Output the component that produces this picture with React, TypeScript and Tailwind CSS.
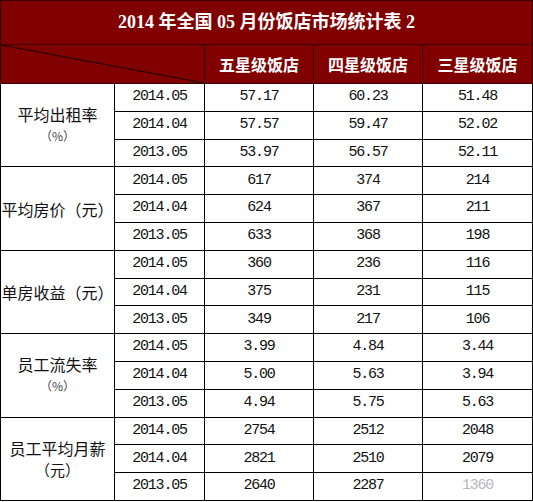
import React from "react";

type Group = {
  label: string[];
  smallSecond?: boolean;
  rows: string[][];
};

const groups: Group[] = [
  {
    label: ["平均出租率", "（%）"],
    smallSecond: true,
    rows: [
      ["2014.05", "57.17", "60.23", "51.48"],
      ["2014.04", "57.57", "59.47", "52.02"],
      ["2013.05", "53.97", "56.57", "52.11"],
    ],
  },
  {
    label: ["平均房价（元）"],
    rows: [
      ["2014.05", "617", "374", "214"],
      ["2014.04", "624", "367", "211"],
      ["2013.05", "633", "368", "198"],
    ],
  },
  {
    label: ["单房收益（元）"],
    rows: [
      ["2014.05", "360", "236", "116"],
      ["2014.04", "375", "231", "115"],
      ["2013.05", "349", "217", "106"],
    ],
  },
  {
    label: ["员工流失率", "（%）"],
    smallSecond: true,
    rows: [
      ["2014.05", "3.99", "4.84", "3.44"],
      ["2014.04", "5.00", "5.63", "3.94"],
      ["2013.05", "4.94", "5.75", "5.63"],
    ],
  },
  {
    label: ["员工平均月薪", "（元）"],
    rows: [
      ["2014.05", "2754", "2512", "2048"],
      ["2014.04", "2821", "2510", "2079"],
      ["2013.05", "2640", "2287", "1360"],
    ],
  },
];

const cjk = "font-['Noto_Sans_CJK_SC',sans-serif]";
const num = "font-['Liberation_Mono','Noto_Sans_CJK_SC',monospace] text-[15px] tracking-[-1.2px]";

export default function App() {
  return (
    <div className="w-[533px] h-[502px] bg-white overflow-hidden">
      <table className="w-[532px] table-fixed border-collapse text-[#111]">
        <colgroup>
          <col className="w-[114px]" />
          <col className="w-[90px]" />
          <col className="w-[109px]" />
          <col className="w-[109px]" />
          <col className="w-[110px]" />
        </colgroup>
        <thead>
          <tr className="h-[44px]">
            <th
              colSpan={5}
              className="bg-[#800000] border border-[#3a0000] text-white text-[18px] font-bold font-['Liberation_Serif','Noto_Sans_CJK_SC',serif] text-center p-0"
            >
              2014 年全国 05 月份饭店市场统计表 2
            </th>
          </tr>
          <tr className="h-[39px]">
            <th colSpan={2} className="relative bg-[#800000] border border-[#3a0000] p-0">
              <svg
                className="absolute inset-0 w-full h-full"
                preserveAspectRatio="none"
                viewBox="0 0 100 100"
              >
                <line x1="0" y1="0" x2="100" y2="100" stroke="#1a0000" strokeWidth="1" vectorEffect="non-scaling-stroke" />
              </svg>
            </th>
            {["五星级饭店", "四星级饭店", "三星级饭店"].map((h) => (
              <th
                key={h}
                className={`bg-[#800000] border border-[#3a0000] text-white text-[16px] font-bold ${cjk} p-0`}
              >
                {h}
              </th>
            ))}
          </tr>
        </thead>
        <tbody>
          {groups.map((g) =>
            g.rows.map((r, i) => (
              <tr key={g.label[0] + i} className="h-[27.8px]">
                {i === 0 && (
                  <td
                    rowSpan={3}
                    className={`border border-black text-center align-middle p-0 whitespace-nowrap ${cjk} text-[16px] leading-[22px]`}
                  >
                    <div>{g.label[0]}</div>
                    {g.label[1] && (
                      <div className={g.smallSecond ? "text-[12px] text-[#444]" : "text-[15px]"}>{g.label[1]}</div>
                    )}
                  </td>
                )}
                {r.map((v, j) => (
                  <td
                    key={j}
                    className={`border border-black text-center align-middle p-0 ${num} ${
                      g.label[0] === "员工平均月薪" && i === 2 && j === 3 ? "text-[#b8b8b8]" : ""
                    }`}
                  >
                    {v}
                  </td>
                ))}
              </tr>
            ))
          )}
        </tbody>
      </table>
    </div>
  );
}
